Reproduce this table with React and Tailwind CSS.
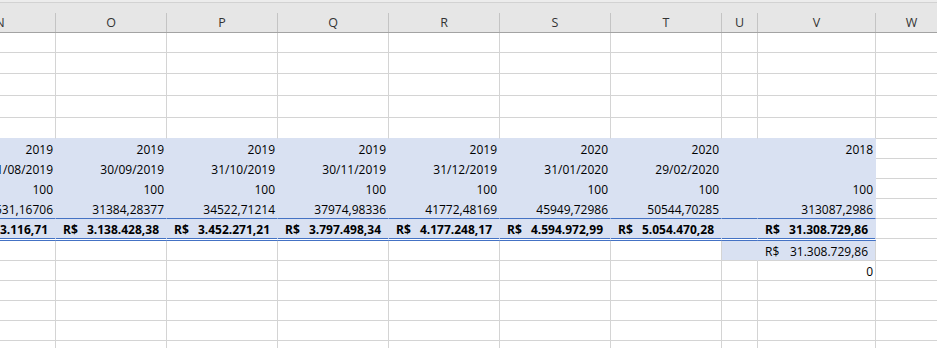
import React from "react";

// spreadsheet columns, N starts off-screen (grid is pulled 55px to the left)
const COLS = [
    { name: "N", w: "w-[111px]" },
    { name: "O", w: "w-[111px]" },
    { name: "P", w: "w-[111px]" },
    { name: "Q", w: "w-[111px]" },
    { name: "R", w: "w-[111px]" },
    { name: "S", w: "w-[111px]" },
    { name: "T", w: "w-[111px]" },
    { name: "U", w: "w-[36px]" },
    { name: "V", w: "w-[118px]" },
    { name: "W", w: "w-[72px]" },
    { name: "", w: "w-[111px]" },
];

const years = ["2019", "2019", "2019", "2019", "2019", "2020", "2020", "", "2018"];
const dates = ["31/08/2019", "30/09/2019", "31/10/2019", "30/11/2019", "31/12/2019", "31/01/2020", "29/02/2020", "", ""];
const qty = ["100", "100", "100", "100", "100", "100", "100", "", "100"];
const values = ["28531,16706", "31384,28377", "34522,71214", "37974,98336", "41772,48169", "45949,72986", "50544,70285", "", "313087,2986"];
const totals = ["2.853.116,71", "3.138.428,38", "3.452.271,21", "3.797.498,34", "4.177.248,17", "4.594.972,99", "5.054.470,28", "", "31.308.729,86"];

const ROWS = [
    { h: "h-[20px]" },
    { h: "h-[21px]" },
    { h: "h-[22px]" },
    { h: "h-[22px]" },
    { h: "h-[21px]", beforeFill: true },
    { h: "h-[20px]", fill: true, vals: years },
    { h: "h-[20px]", fill: true, vals: dates },
    { h: "h-[20px]", fill: true, vals: qty },
    { h: "h-[20px]", fill: true, vals: values, line: true },
    { h: "h-[22px]", fill: true, vals: totals, money: true, double: true },
    { h: "h-[20px]", grandTotal: true },
    { h: "h-[20px]", zero: true },
    { h: "h-[20px]" },
    { h: "h-[20px]" },
    { h: "h-[20px]" },
    { h: "h-[20px]" },
];

const Money = ({ value, bold }) => (
    <div className={`flex w-full items-end justify-between px-[7px] leading-[16px] whitespace-nowrap ${bold ? "font-bold" : ""}`}>
        <span>R$</span>
        <span>{value}</span>
    </div>
);

const Plain = ({ value }) => (
    <div className="flex w-full items-end justify-end pr-[2px] leading-[16px] whitespace-nowrap">
        {value}
    </div>
);

const cellClass = (row, i) => {
    const inFill = i <= 8;
    let cls = "flex shrink-0 items-end overflow-hidden border-r border-b ";

    if (row.fill && inFill) {
        cls += "bg-[#d9e1f2] border-r-[#d9e1f2] ";
        if (row.line) cls += "border-b-[#4472c4] ";
        else if (row.double) cls += "border-b-[3px] border-double border-b-[#4472c4] bg-clip-padding ";
        else cls += "border-b-[#d9e1f2] ";
        return cls + "h-full";
    }

    if (row.fill && row.double) {
        // keep the plain gridline level with the first line of the double border
        return cls + "border-[#d4d4d4] h-[20px] self-start";
    }

    if (row.beforeFill && inFill) {
        return cls + "border-r-[#d4d4d4] border-b-[#d9e1f2] h-full";
    }

    if (row.grandTotal && (i === 7 || i === 8)) {
        cls += "bg-[#d9e1f2] border-b-[#d4d4d4] ";
        cls += i === 7 ? "border-r-[#d9e1f2] " : "border-r-[#d4d4d4] ";
        return cls + "h-full";
    }

    return cls + "border-[#d4d4d4] h-full";
};

const HeaderRow = () => (
    <div className="bg-[#ececec] pt-[2px]">
        <div className="flex h-[31px] border-t border-b border-t-[#d2d2d2] border-b-[#a3a3a3] bg-[#e6e6e6]">
            {COLS.map((c, i) => (
                <div key={i} className={`${c.w} flex h-full shrink-0`}>
                    <div className="flex flex-1 items-end justify-center pb-[1px] text-[12.5px] leading-[16px] text-[#333]">
                        {c.name}
                    </div>
                    <div className="h-[19px] w-px self-end bg-[#c4c4c4]" />
                </div>
            ))}
        </div>
    </div>
);

const App = () => {
    return (
        <div className="h-[348px] w-[937px] overflow-hidden bg-white font-['Open_Sans',sans-serif] text-[12px] text-black">
            <div className="ml-[-55px] w-max">
                <HeaderRow />

                {ROWS.map((row, r) => (
                    <div key={r} className={`flex ${row.h}`}>
                        {COLS.map((c, i) => {
                            let content = null;
                            if (row.vals && i <= 8 && row.vals[i]) {
                                content = row.money ? <Money value={row.vals[i]} bold /> : <Plain value={row.vals[i]} />;
                            }
                            if (row.grandTotal && i === 8) content = <Money value="31.308.729,86" />;
                            if (row.zero && i === 8) content = <Plain value="0" />;

                            return (
                                <div key={i} className={`${c.w} ${cellClass(row, i)}`}>
                                    {content}
                                </div>
                            );
                        })}
                    </div>
                ))}
            </div>
        </div>
    );
};

export default App;
